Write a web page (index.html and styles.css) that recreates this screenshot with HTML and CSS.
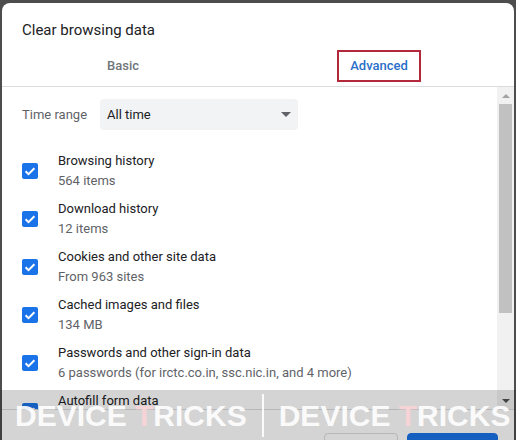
FILE: index.html
```html
<!DOCTYPE html>
<html lang="en">
<head>
  <meta charset="UTF-8" />
  <meta name="viewport" content="width=device-width, initial-scale=1.0"/>
  <title>Clear browsing data</title>
  <link rel="stylesheet" href="styles.css">
</head>
<body>

  <div class="dialog">
    <h1 class="title">Clear browsing data</h1>

    <div class="tabs">
      <div class="tab">Basic</div>
      <div class="tab active"><span class="tab-label">Advanced</span></div>
    </div>

    <div class="body">
      <div class="content">
        <div class="range-row">
          <span class="range-label">Time range</span>
          <div class="select">
            <span>All time</span>
            <span class="caret"></span>
          </div>
        </div>

        <ul class="options">
          <li class="option">
            <span class="check"><svg viewBox="0 0 16 16"><path d="M3.6 8.3l2.9 2.9 5.9-6"/></svg></span>
            <div class="option-text">
              <div class="option-name">Browsing history</div>
              <div class="option-sub">564 items</div>
            </div>
          </li>
          <li class="option">
            <span class="check"><svg viewBox="0 0 16 16"><path d="M3.6 8.3l2.9 2.9 5.9-6"/></svg></span>
            <div class="option-text">
              <div class="option-name">Download history</div>
              <div class="option-sub">12 items</div>
            </div>
          </li>
          <li class="option">
            <span class="check"><svg viewBox="0 0 16 16"><path d="M3.6 8.3l2.9 2.9 5.9-6"/></svg></span>
            <div class="option-text">
              <div class="option-name">Cookies and other site data</div>
              <div class="option-sub">From 963 sites</div>
            </div>
          </li>
          <li class="option">
            <span class="check"><svg viewBox="0 0 16 16"><path d="M3.6 8.3l2.9 2.9 5.9-6"/></svg></span>
            <div class="option-text">
              <div class="option-name">Cached images and files</div>
              <div class="option-sub">134 MB</div>
            </div>
          </li>
          <li class="option">
            <span class="check"><svg viewBox="0 0 16 16"><path d="M3.6 8.3l2.9 2.9 5.9-6"/></svg></span>
            <div class="option-text">
              <div class="option-name">Passwords and other sign-in data</div>
              <div class="option-sub">6 passwords (for irctc.co.in, ssc.nic.in, and 4 more)</div>
            </div>
          </li>
          <li class="option">
            <span class="check"><svg viewBox="0 0 16 16"><path d="M3.6 8.3l2.9 2.9 5.9-6"/></svg></span>
            <div class="option-text">
              <div class="option-name">Autofill form data</div>
            </div>
          </li>
        </ul>
      </div>

      <div class="scrollbar">
        <div class="sb-arrow sb-up"></div>
        <div class="sb-thumb"></div>
        <div class="sb-track"></div>
        <div class="sb-arrow sb-down"></div>
      </div>
    </div>

    <div class="footer">
      <button class="btn btn-cancel">Cancel</button>
      <button class="btn btn-primary">Clear data</button>
    </div>
  </div>

  <!-- watermark band over the bottom of the dialog -->
  <div class="watermark">
    <span class="mark">DEVICE <span class="mark-t">T</span>RICKS</span>
    <span class="mark-divider"></span>
    <span class="mark">DEVICE <span class="mark-t">T</span>RICKS</span>
  </div>

</body>
</html>
```

FILE: styles.css
```css
html, body {
  height: 100%;
  overflow: hidden;
}

body {
  margin: 0;
  padding: 3px 0 0 2px;
  box-sizing: border-box;
  background: #4d4d4d;
  font-family: Roboto, "Liberation Sans", Arial, sans-serif;
  font-size: 13px;
  color: #202124;
}

.dialog {
  width: 512px;
  height: 437px;
  overflow: hidden;
  background: #fff;
  border-radius: 8px 8px 0 0;
  display: flex;
  flex-direction: column;
}

.dialog > * {
  flex: none;
}

.title {
  margin: 0;
  padding: 17px 20px 0;
  font-size: 15px;
  font-weight: 400;
  line-height: 20px;
  color: #202124;
}

.tabs {
  display: grid;
  grid-template-columns: 242px 242px;
  column-gap: 14px;
  height: 41px;
  padding-top: 5px;
  border-bottom: 1px solid #dadce0;
}

.tab {
  display: flex;
  align-items: center;
  justify-content: center;
  font-weight: 500;
  line-height: 20px;
  color: #70757a;
}

.tab.active {
  color: #2a6fc9;
}

.tab-label {
  border: 2px solid #b3283a;
  padding: 4px 11px;
}

.body {
  display: flex;
  height: 322px;
}

.content {
  flex: 1;
  overflow: hidden;
  padding: 12px 20px 0;
}

.range-row {
  display: flex;
  align-items: center;
  height: 31px;
}

.range-label {
  width: 78px;
  color: #5f6368;
}

.select {
  width: 198px;
  height: 31px;
  box-sizing: border-box;
  padding: 0 7px;
  background: #f1f3f4;
  border-radius: 4px;
  display: flex;
  align-items: center;
  justify-content: space-between;
}

.caret {
  width: 0;
  height: 0;
  border-left: 5px solid transparent;
  border-right: 5px solid transparent;
  border-top: 5px solid #5f6368;
}

.options {
  list-style: none;
  margin: 21px 0 0;
  padding: 0;
  display: flex;
  flex-direction: column;
  gap: 8px;
}

.option {
  display: flex;
  align-items: center;
  gap: 20px;
  line-height: 20px;
  min-height: 40px;
}

.check {
  width: 16px;
  height: 16px;
  flex: none;
  background: #1a73e8;
  border-radius: 2px;
}

.check svg {
  display: block;
  width: 16px;
  height: 16px;
  fill: none;
  stroke: #fff;
  stroke-width: 2;
}

.option:last-child {
  align-items: flex-start;
}

.option:last-child .check {
  margin-top: 12px;
}

.option-sub {
  color: #5f6368;
}

.scrollbar {
  width: 17px;
  background: #f1f1f1;
  display: flex;
  flex-direction: column;
}

.sb-arrow {
  height: 17px;
  display: flex;
  align-items: center;
  justify-content: center;
}

.sb-arrow::before {
  content: "";
  border-left: 4px solid transparent;
  border-right: 4px solid transparent;
}

.sb-up::before {
  border-bottom: 4px solid #a3a3a3;
}

.sb-down::before {
  border-top: 4px solid #505050;
}

.sb-thumb {
  height: 209px;
  margin: 0 2px;
  background: #c1c1c1;
}

.sb-track {
  flex: 1;
}

.footer {
  border-top: 1px solid #dadce0;
  padding: 23px 16px 0;
  display: flex;
  justify-content: flex-end;
  gap: 9px;
}

.btn {
  height: 32px;
  padding: 0 16px;
  border-radius: 4px;
  font-family: inherit;
  font-size: 13px;
  font-weight: 500;
}

.btn-cancel {
  background: #fff;
  border: 1px solid #dadce0;
  color: #1a73e8;
}

.btn-primary {
  background: #1a73e8;
  border: 1px solid #1a73e8;
  color: #fff;
  padding: 0 15px;
}

.watermark {
  position: absolute;
  left: 0;
  right: 0;
  top: 390px;
  height: 50px;
  background: rgba(0, 0, 0, 0.17);
  display: flex;
  align-items: center;
  padding-left: 15px;
  gap: 15px;
  overflow: hidden;
  white-space: nowrap;
}

.mark {
  font-family: "Liberation Sans", Arial, sans-serif;
  font-weight: 700;
  font-size: 30px;
  line-height: 30px;
  margin-top: 2px;
  color: rgba(255, 255, 255, 0.92);
}

.mark-t {
  color: #f5d3d6;
}

.mark-divider {
  width: 2px;
  height: 43px;
  background: rgba(255, 255, 255, 0.9);
}
```
